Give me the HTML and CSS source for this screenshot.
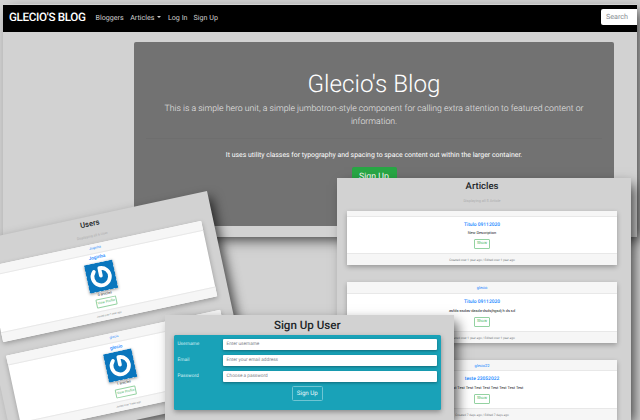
FILE: index.html
```html
<!DOCTYPE html>
<html lang="en">
<head>
<meta charset="utf-8">
<title>Glecio's Blog</title>
<link rel="stylesheet" href="styles.css">
</head>
<body>
<svg width="0" height="0" class="defs">
  <symbol id="avatar" viewBox="0 0 29 29">
    <rect width="29" height="29" fill="#0a76bd"/>
    <path d="M14.5 13.5V5.8A8.7 8.7 0 1 1 8.4 8.4" fill="none" stroke="#fff" stroke-width="3.7" stroke-linecap="round" stroke-linejoin="round"/>
  </symbol>
</svg>

<section class="window home">
  <nav class="navbar">
    <span class="brand">GLECIO'S BLOG</span>
    <a class="bloggers">Bloggers</a>
    <a class="drop">Articles</a>
    <a class="login">Log In</a>
    <a>Sign Up</a>
    <span class="search">Search</span>
  </nav>
  <div class="jumbotron">
    <h1>Glecio's Blog</h1>
    <p class="lead">This is a simple hero unit, a simple jumbotron-style component for calling extra attention to featured content or<br>information.</p>
    <hr>
    <p class="note">It uses utility classes for typography and spacing to space content out within the larger container.</p>
    <span class="hero-btn">Sign Up</span>
  </div>
</section>

<section class="window users">
  <h2>Users</h2>
  <p class="count">Displaying all 6 User</p>
  <article class="card">
    <header>Joginha</header>
    <div class="body">
      <h3>Joginha</h3>
      <svg class="avatar"><use href="#avatar"/></svg>
      <p>0 articles</p>
      <span class="btn">View Profile</span>
    </div>
    <footer>Joined over 1 year ago</footer>
  </article>
  <article class="card">
    <header>glecio</header>
    <div class="body">
      <h3>glecio</h3>
      <svg class="avatar"><use href="#avatar"/></svg>
      <p>1 articles</p>
      <span class="btn">View Profile</span>
    </div>
    <footer>Joined over 1 year ago</footer>
  </article>
</section>

<section class="window articles">
  <h2>Articles</h2>
  <p class="count">Displaying all 5 Article</p>
  <article class="card">
    <header class="blank"></header>
    <div class="body">
      <h3>Titulo 09112020</h3>
      <p>New Description</p>
      <span class="btn">Show</span>
    </div>
    <footer>Created over 1 year ago / Edited over 1 year ago</footer>
  </article>
  <article class="card">
    <header>glecio</header>
    <div class="body">
      <h3>Titulo 09112020</h3>
      <p>asfds-asdas-dasda-dsdsjhgsdj h ds sd</p>
      <span class="btn">Show</span>
    </div>
    <footer>Created over 1 year ago / Edited over 1 year ago</footer>
  </article>
  <article class="card">
    <header>glecio22</header>
    <div class="body">
      <h3>teste 23052022</h3>
      <p>Test Test Test Test Test Test Test Test Test Test</p>
      <span class="btn">Show</span>
    </div>
    <footer>Created 7 days ago / Edited 7 days ago</footer>
  </article>
</section>

<section class="window signup">
  <h2>Sign Up User</h2>
  <form class="form">
    <div class="row"><label>Username</label><span class="input">Enter username</span></div>
    <div class="row"><label>Email</label><span class="input">Enter your email address</span></div>
    <div class="row"><label>Password</label><span class="input">Choose a password</span></div>
    <span class="submit">Sign Up</span>
  </form>
</section>
</body>
</html>
```
FILE: styles.css
```css
* { box-sizing: border-box; }
body {
  margin: 0;
  width: 640px;
  height: 420px;
  overflow: hidden;
  position: relative;
  background: #d2d2d2;
  font-family: Roboto, "Liberation Sans", sans-serif;
  color: #212529;
  text-rendering: geometricPrecision;
}
h1, h2, h3, p { margin: 0; }
.defs { position: absolute; }

/* overlapping windows on a free canvas */
.window {
  position: absolute;
  background: #d2d2d2;
  box-shadow: 5px 5px 12px -2px rgba(0, 0, 0, .7);
  text-align: center;
  white-space: nowrap;
}
.home { left: 3px; top: 4px; width: 634px; height: 233px; }
.users {
  left: -36px; top: 190.5px; width: 243px; height: 209px;
  transform-origin: top right;
  transform: rotate(-12.1deg);
  padding: 0 12px;
}
.articles { left: 337px; top: 178px; width: 294px; height: 242px; padding: 0 14px 0 10px; }
.signup { left: 165px; top: 315px; width: 289px; height: 105px; padding: 0 13px 0 8.5px; }

/* home */
.navbar {
  display: flex;
  align-items: center;
  height: 27px;
  margin-top: .5px;
  padding: 0 0 2px 6px;
  background: #000;
  color: #d0d0d0;
  font-size: 7.15px;
}
.brand { color: #fff; font-size: 11.7px; font-weight: 500; letter-spacing: -.35px; width: 86.5px; text-align: left; }
.bloggers { margin-right: 6.5px; }
.drop { display: flex; align-items: center; margin-right: 6.5px; }
.drop::after { content: ""; margin-left: 3px; border: 2px solid transparent; border-top-color: #d0d0d0; border-bottom: 0; }
.login { margin-right: 6px; }
.search {
  margin-left: auto;
  width: 36px; height: 16px;
  padding-left: 5px;
  border-radius: 2px 0 0 2px;
  background: #fff;
  color: #858b91;
  font-size: 7.2px;
  line-height: 16px;
  text-align: left;
}
.jumbotron {
  width: 480px; height: 184px;
  margin: 10.5px 0 0 131px;
  padding: 27px 12px 0;
  border-radius: 2px;
  background: #727272;
  color: #fff;
}
.jumbotron h1 { font-size: 24.2px; line-height: 30px; font-weight: 300; }
.lead { margin-top: 4px; font-size: 8.7px; line-height: 13px; font-weight: 300; color: #e8e8e8; }
.jumbotron hr { border: 0; border-top: 1px solid #6e6e6e; margin: 9px 0 11px; }
.note { font-size: 6.9px; line-height: 10px; }
.hero-btn {
  display: block;
  width: 45px; height: 20px;
  margin: 7px auto 0;
  border-radius: 2px;
  background: #28a745;
  font-size: 8.8px;
  line-height: 21px;
}

/* cards */
.card { background: #fff; box-shadow: 0 2px 5px rgba(0, 0, 0, .28); border-radius: 1px; }
.card header, .card footer { background: #f6f6f6; }
.card header { color: #1384ff; border-bottom: 1px solid #e8e8e8; }
.card footer { color: #747a80; border-top: 1px solid #e8e8e8; }
.card h3 { color: #1384ff; font-weight: 500; }
.btn { display: block; margin: 0 auto; border: 1px solid #93d2a1; color: #45b35e; border-radius: 1px; }
.count { color: #adadad; }

/* users */
.users h2 { font-size: 7.6px; line-height: 10px; font-weight: 500; padding-top: 3px; }
.users .count { font-size: 3.5px; line-height: 5px; margin: 5px 0 4.6px; }
.users .card { height: 77.4px; margin-bottom: 14.4px; display: flex; flex-direction: column; }
.users header { height: 10px; font-size: 3.4px; line-height: 9px; }
.users .body { flex: 1; padding-top: 2.5px; }
.users h3 { font-size: 4.7px; line-height: 6px; }
.avatar { display: block; width: 29px; height: 29px; margin: .5px auto 0; box-shadow: 0 1px 3px rgba(0, 0, 0, .4); }
.users .body p { font-size: 3.5px; line-height: 4px; margin-top: 1px; }
.users .btn { width: 21px; height: 9px; margin-top: 2.6px; font-size: 3.4px; line-height: 7px; }
.users footer { height: 9.6px; font-size: 2.5px; line-height: 9.6px; }

/* articles */
.articles h2 { font-size: 9.5px; line-height: 12px; font-weight: 500; padding-top: 2.5px; }
.articles .count { font-size: 3.8px; line-height: 6px; margin: 5.5px 0 6.5px; }
.articles .card { margin-bottom: 17.2px; }
.articles header { height: 11.5px; font-size: 4px; line-height: 11px; }
.articles header.blank { height: 6px; }
.articles .body { height: 36.8px; padding-top: 5px; }
.articles h3 { font-size: 4.9px; line-height: 6px; }
.articles .body p { font-size: 3.9px; line-height: 6px; margin-top: 2.6px; }
.articles .btn { width: 15.5px; height: 9.6px; margin-top: 3.4px; font-size: 4.1px; line-height: 7.8px; }
.articles footer { height: 12px; font-size: 3.1px; line-height: 12px; }
.articles .card:last-child { height: 60.5px; overflow: hidden; margin-bottom: 0; }

/* sign up */
.signup h2 { font-size: 11.6px; line-height: 18.5px; padding-top: 1px; font-weight: 500; }
.form {
  height: 75px;
  padding: 4.5px 4px 0;
  border-radius: 1.5px;
  background: #19a2b8;
  color: #d4eff4;
  font-size: 4.8px;
  box-shadow: 0 2px 5px rgba(0, 0, 0, .35);
}
.row { display: flex; align-items: center; height: 11.4px; margin-bottom: 4.4px; }
.row label { width: 45.5px; text-align: left; }
.input {
  flex: 1;
  height: 11.4px;
  padding-left: 3.5px;
  background: #fff;
  border-radius: 1px;
  color: #7b8187;
  font-size: 4.7px;
  line-height: 11.4px;
  text-align: left;
  box-shadow: 0 1px 3px rgba(0, 0, 0, .35);
}
.submit {
  display: block;
  width: 30.5px; height: 14.5px;
  margin: 0 auto;
  border: 1px solid #6fc5d3;
  border-radius: 1.5px;
  color: #e8f6f8;
  font-size: 6.2px;
  line-height: 12.5px;
}
```
